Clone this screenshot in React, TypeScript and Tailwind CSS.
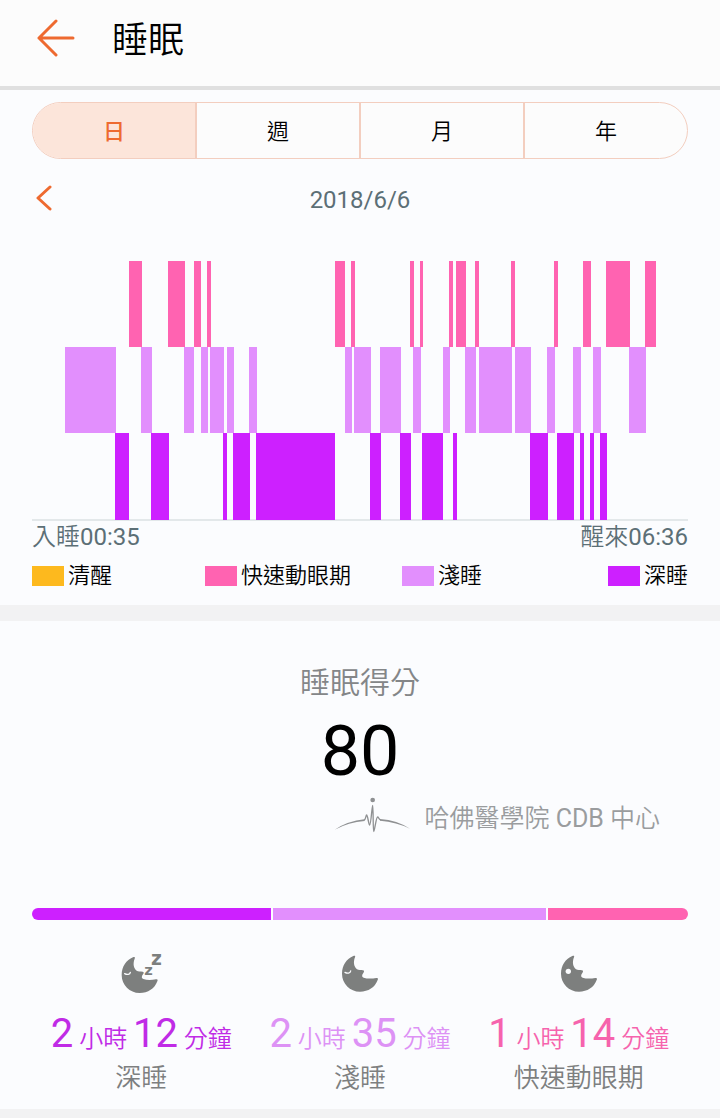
import { clsx } from 'clsx';
import type { ReactNode } from 'react';

type Stage = 'rem' | 'light' | 'deep';

const PERIODS = ['日', '週', '月', '年'];

const LEGEND = [
  { label: '清醒', swatch: 'bg-[#fdb91e]', align: 'justify-start' },
  { label: '快速動眼期', swatch: 'bg-[#ff63b1]', align: 'justify-center' },
  { label: '淺睡', swatch: 'bg-[#e28ffd]', align: 'justify-center' },
  { label: '深睡', swatch: 'bg-[#cd20ff]', align: 'justify-end' },
];

const STAGE_FILL: Record<Stage, string> = {
  rem: 'fill-[#ff63b1]',
  light: 'fill-[#e28ffd]',
  deep: 'fill-[#cd20ff]',
};

const STAGE_TOP: Record<Stage, number> = { rem: 0, light: 86, deep: 172 };

// [start, end] of every segment along the night
const SEGMENTS: Record<Stage, [number, number][]> = {
  rem: [
    [97, 110], [136, 153], [162, 169], [175, 179], [303, 313], [319, 323], [378, 382],
    [388, 391], [417, 421], [424, 434], [443, 447], [479, 483], [522, 526], [551, 559],
    [574, 598], [613, 624],
  ],
  light: [
    [33, 84], [109, 120], [152, 162], [169, 176], [178, 192], [195, 202], [217, 225],
    [313, 320], [322, 339], [348, 369], [381, 389], [411, 418], [433, 444], [447, 480],
    [483, 499], [515, 523], [541, 549], [561, 569], [597, 614],
  ],
  deep: [
    [83, 97], [119, 137], [191, 195], [201, 218], [224, 303], [338, 349], [368, 379],
    [390, 411], [421, 425], [498, 516], [525, 542], [548, 552], [558, 562], [568, 575],
  ],
};

function SleepChart() {
  return (
    <svg
      className="block h-[260px] w-full"
      viewBox="0 0 656 260"
      preserveAspectRatio="none"
      role="img"
      aria-label="睡眠"
    >
      <rect x="0" y="258" width="656" height="2" className="fill-[#e3e8ea]" />
      {(Object.keys(SEGMENTS) as Stage[]).map((stage) =>
        SEGMENTS[stage].map(([start, end]) => (
          <rect
            key={`${stage}-${start}`}
            x={start}
            y={STAGE_TOP[stage]}
            width={end - start}
            height={stage === 'deep' ? 87 : 86}
            className={STAGE_FILL[stage]}
          />
        )),
      )}
    </svg>
  );
}

function Moon({ children, low = false }: { children: ReactNode; low?: boolean }) {
  return (
    <svg className="h-10 w-10 overflow-visible" viewBox="0 0 120 120" aria-hidden="true">
      <g transform={low ? 'translate(0 0)' : 'translate(4 -4)'}>
        <path
          d="M36 10C40 8 43 9 41 14C35 29 38 43 47 50C52 53 58 52 65 53C69 54 69 57 66 61C61 68 61 73 67 75C78 79 92 78 105 76C110 75 111 78 109 82C101 104 81 117 56 117C26 117 2 93 2 63C2 38 16 18 36 10Z"
          fill="#7d7f7e"
        />
        {children}
      </g>
    </svg>
  );
}

function ClosedEye() {
  return <path d="M11 59C18 63 27 62 28 55" fill="none" stroke="#fbfcfe" strokeWidth="4" strokeLinecap="round" />;
}

function PulseLogo() {
  return (
    <svg className="h-[37px] w-[79px]" viewBox="0 0 237 111" fill="none" aria-hidden="true">
      <circle cx="116" cy="9" r="7" fill="#8e9092" />
      <path d="M2 98Q42 72 91 67L92 72Q44 76 2 98Z" fill="#8e9092" />
      <path d="M228 95Q190 70 138 66L138 71Q188 75 228 95Z" fill="#8e9092" />
      <path
        d="M90 69C96 68 95 54 98 54C101 54 104 84 107 84C111 84 114 25 116 25C118 25 117 104 119 104C122 104 126 60 131 60C134 60 134 68 140 69"
        stroke="#8e9092"
        strokeWidth="4"
        strokeLinejoin="round"
      />
    </svg>
  );
}

interface StageTotalProps {
  icon: ReactNode;
  hours: number;
  minutes: number;
  label: string;
  color: string;
}

function StageTotal({ icon, hours, minutes, label, color }: StageTotalProps) {
  return (
    <div className="flex flex-1 flex-col items-center">
      {icon}
      <p className={clsx('mt-4 text-2xl leading-[48px] whitespace-nowrap', color)}>
        <span className="text-[40px] font-normal">{hours}</span> 小時{' '}
        <span className="text-[40px] font-normal">{minutes}</span> 分鐘
      </p>
      <p className="text-[26px] leading-[30px] text-[#7d7f80]">{label}</p>
    </div>
  );
}

export default function App() {
  return (
    <div className="min-h-screen bg-[#f2f2f3] font-['Roboto','Noto_Sans_CJK_TC',sans-serif] font-[350]">
      <header className="flex h-[90px] items-center border-b-4 border-[#e0e0e0] bg-[#fcfcfc] px-9 pb-2">
        <button type="button" aria-label="返回">
          <svg className="h-10 w-10" viewBox="0 0 40 40" fill="none" aria-hidden="true">
            <path
              d="M20 2L3 19L20 36M3 19H37"
              stroke="#ee6a30"
              strokeWidth="3"
              strokeLinecap="round"
              strokeLinejoin="round"
            />
          </svg>
        </button>
        <h1 className="ml-9 pt-1 text-4xl font-[350] text-black">睡眠</h1>
      </header>

      <main>
        <section className="bg-[#fbfcfe] px-8 pt-3 pb-[15px]">
          <div className="flex h-[57px] overflow-hidden rounded-full border border-[#f3cebf] bg-[#fcfcfc]">
            {PERIODS.map((period, i) => (
              <button
                key={period}
                type="button"
                aria-pressed={i === 0}
                className={clsx(
                  'flex-1 border-[#f3cebf] pt-0.5 text-[22px]',
                  i === 0 ? 'bg-[#fce5da] font-medium text-[#ee6a30]' : 'border-l-2 text-black',
                )}
              >
                {period}
              </button>
            ))}
          </div>

          <div className="mt-5 grid h-10 grid-cols-3 items-center">
            <button type="button" aria-label="前一天" className="justify-self-start">
              <svg className="h-7 w-6" viewBox="0 0 24 28" fill="none" aria-hidden="true">
                <path
                  d="M18 2L6 13L18 24"
                  stroke="#ee6a30"
                  strokeWidth="3"
                  strokeLinecap="round"
                  strokeLinejoin="round"
                />
              </svg>
            </button>
            <time dateTime="2018-06-06" className="pt-0.5 text-center text-2xl font-normal text-[#5c6f76]">
              2018/6/6
            </time>
          </div>

          <div className="mt-[42px]">
            <SleepChart />
          </div>

          <div className="flex justify-between text-2xl leading-8 text-[#5c6f76]">
            <span>
              入睡<span className="font-normal">00:35</span>
            </span>
            <span>
              醒來<span className="font-normal">06:36</span>
            </span>
          </div>

          <ul className="mt-[9px] grid grid-cols-4">
            {LEGEND.map(({ label, swatch, align }) => (
              <li key={label} className={clsx('flex items-center gap-1', align)}>
                <span className={clsx('h-5 w-8 shrink-0', swatch)} />
                <span className="text-[22px] leading-7 whitespace-nowrap text-black">{label}</span>
              </li>
            ))}
          </ul>
        </section>

        <section className="mt-4 bg-[#fbfcfe] px-8 pt-10 pb-4">
          <h2 className="text-center text-[30px] leading-[44px] font-[350] text-[#848688]">睡眠得分</h2>
          <p className="text-center text-[70px] leading-[92px] font-normal text-black">80</p>
          <div className="flex items-start justify-end gap-3 pr-7">
            <PulseLogo />
            <p className="pt-0.5 text-[25px] leading-10 text-[#9a9c9e]">
              哈佛醫學院 <span className="font-normal">CDB</span> 中心
            </p>
          </div>

          <div className="mt-[69px] flex h-3 gap-0.5 overflow-hidden rounded-full">
            <div className="grow-[239] bg-[#cd20ff]" />
            <div className="grow-[273] bg-[#e28ffd]" />
            <div className="grow-[140] bg-[#ff63b1]" />
          </div>

          <div className="mt-[34px] flex">
            <StageTotal
              icon={
                <Moon low>
                  <ClosedEye />
                  <g fill="#7d7f7e" className="font-['DejaVu_Sans',sans-serif] font-bold">
                    <text x="70" y="62" fontSize="44">
                      z
                    </text>
                    <text x="90" y="33" fontSize="56">
                      z
                    </text>
                  </g>
                </Moon>
              }
              hours={2}
              minutes={12}
              label="深睡"
              color="text-[#c02be6]"
            />
            <StageTotal
              icon={
                <Moon>
                  <ClosedEye />
                </Moon>
              }
              hours={2}
              minutes={35}
              label="淺睡"
              color="text-[#dd92f5]"
            />
            <StageTotal
              icon={
                <Moon>
                  <circle cx="24" cy="56" r="8" fill="#fbfcfe" />
                </Moon>
              }
              hours={1}
              minutes={14}
              label="快速動眼期"
              color="text-[#f663ad]"
            />
          </div>
        </section>
      </main>
    </div>
  );
}
